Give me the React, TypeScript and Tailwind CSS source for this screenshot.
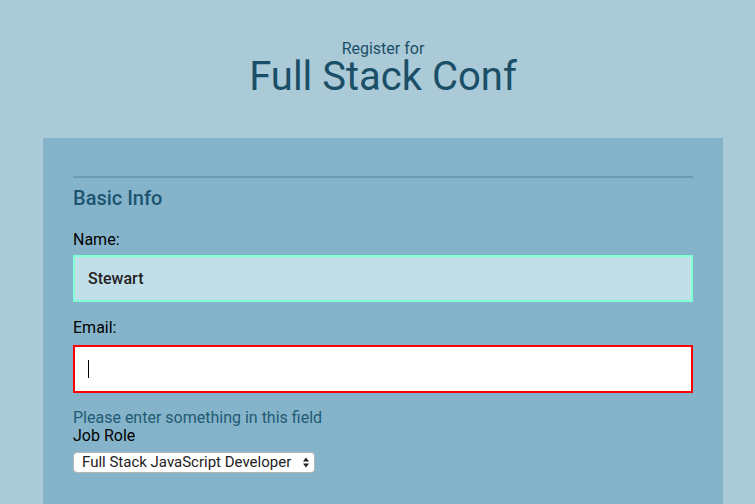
import React from 'react';

export default function App() {
  return (
    <div className="min-h-[504px] w-full bg-[#abcad8] font-['Roboto',sans-serif] overflow-hidden">
      <div className="ml-[43px] w-[680px]">
        {/* Header */}
        <header className="pt-[41px] text-center text-[#1b4f67]">
          <p className="text-[16px] leading-[15px]">Register for</p>
          <h1 className="mt-[1px] text-[40px] leading-[40px]">Full Stack Conf</h1>
        </header>

        {/* Form panel */}
        <form className="mt-[41px] bg-[#85b4ca] px-[30px] pt-[38px] pb-[40px]">
          <div className="border-t-2 border-[#6a9db3]" />
          <h2 className="mt-[8px] text-[20px] leading-[24px] font-medium text-[#1c5570]">Basic Info</h2>

          <label className="mt-[20px] block text-[16px] leading-[20px] text-black">Name:</label>
          <div className="mt-[5px] flex h-[47px] items-center border-2 border-[#7fffd4] bg-[#c1dfe9] px-[13px] text-[16px] font-medium text-[#222]">
            Stewart
          </div>

          <label className="mt-[16px] block text-[16px] leading-[20px] text-black">Email:</label>
          <div className="mt-[7px] flex h-[48px] items-center border-2 border-[#ff0000] bg-white px-[13px]">
            <span className="block h-[18px] w-px bg-black" />
          </div>

          <p className="mt-[16px] text-[16px] leading-[18px] text-[#215b74]">Please enter something in this field</p>
          <p className="text-[16px] leading-[18px] text-black">Job Role</p>

          <div className="mt-[7px] flex h-[21px] w-[242px] items-center justify-between rounded-[4px] border border-[#b5b5b5] bg-white pl-[8px] pr-[4px] text-[15px] leading-[19px] text-[#222]">
            <span>Full Stack JavaScript Developer</span>
            <svg width="8" height="13" viewBox="0 0 8 13" className="shrink-0">
              <path d="M4 1.5 L7 5.5 H1 Z" fill="#222" />
              <path d="M4 11.5 L7 7.5 H1 Z" fill="#222" />
            </svg>
          </div>
        </form>
      </div>
    </div>
  );
}
